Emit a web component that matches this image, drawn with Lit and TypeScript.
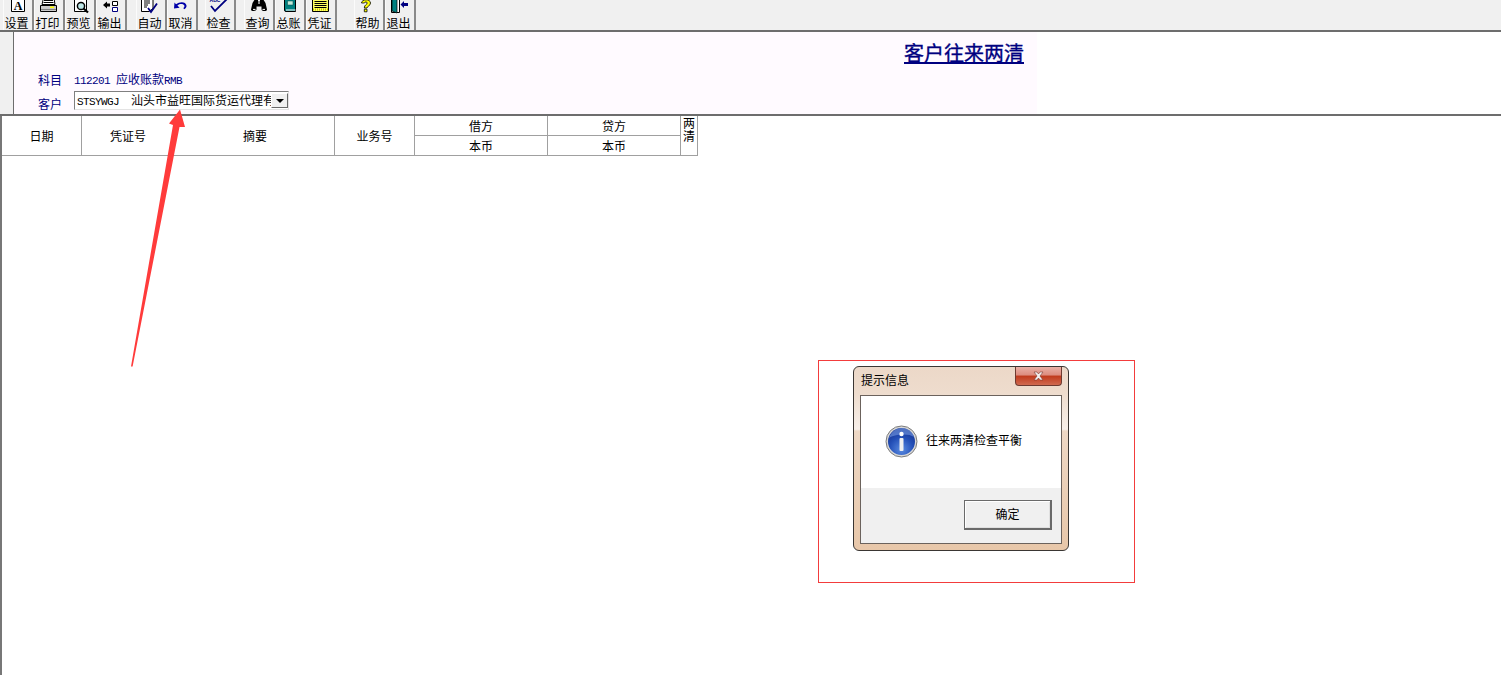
import { LitElement, html, css, svg } from "lit";
import { customElement } from "lit/decorators.js";

const icons: Record<string, unknown> = {
  set: svg`<path d="M7.5 -3H20.5V11.5H7.5Z" fill="#fff" stroke="#000"/><text x="14" y="9.5" font-family="Liberation Serif" font-size="12" font-weight="700" text-anchor="middle" fill="#000">A</text>`,
  print: svg`<path d="M8.5 -2H19L20 4.5H7Z" fill="#fff" stroke="#000"/><path d="M9 0.5H18M8.5 2.5H18.5" stroke="#000"/><path d="M5.5 5.5H21.5V11.5H5.5Z" fill="#c8c8c8" stroke="#000"/><path d="M15 6.5H19V8H15Z" fill="#ff0"/><path d="M6 9.5H21" stroke="#808080"/>`,
  preview: svg`<path d="M8.5 -3H20.5V11.5H8.5Z" fill="#fff" stroke="#000"/><circle cx="15" cy="6" r="3.6" fill="#bfe8e8" stroke="#000" stroke-width="1.5"/><path d="M17.5 8.5L22 12.5" stroke="#000" stroke-width="2.2"/>`,
  out: svg`<path d="M6 5L10 1.5V3.5H13V6.5H10V8.5Z" fill="#000"/><path d="M15.5 1.5H20.5V5.5H15.5Z" fill="#fff" stroke="#000"/><path d="M15.5 7.5H20.5V11.5H15.5Z" fill="#fff" stroke="#000080"/>`,
  auto: svg`<g transform="translate(-2 0)"><path d="M6.5 -3H16.5L18 -1V8.5L14 11.5H6.5Z" fill="#fff" stroke="#000"/><path d="M9 1H15M9 3H15M9 5H13M9 7H12" stroke="#000"/><path d="M13 8L16 12L22 3.5" fill="none" stroke="#000080" stroke-width="1.8"/></g>`,
  undo: svg`<g transform="translate(-2 0)"><path d="M8 8.5L8.5 2.5L10 4.2C14 1 20 1.6 20.5 5.5C20.8 7.5 19.5 8.6 18 9.2L17.4 8C19.2 7 18.8 4.6 16 4.1C14 3.8 12.4 4.5 11.4 5.6L13.6 7.8Z" fill="#0000a8"/></g>`,
  check: svg`<g transform="translate(-1 0)"><text x="10" y="1.5" font-family="Liberation Sans" font-size="5" font-weight="700" text-anchor="middle" fill="#000080">ABC</text><path d="M6 6L10 11L22 -1" fill="none" stroke="#000080" stroke-width="1.8"/></g>`,
  find: svg`<g transform="translate(-1 0)"><path d="M8.5 3L11 -1H14V4H16V-1H19L21.5 3L23 9.5C23 11.5 18 11.5 17.5 9.5V6.5H12.5V9.5C12 11.5 7 11.5 7 9.5Z" fill="#000"/><path d="M9 9.4H11.5M18.5 9.4H21" stroke="#fff"/><path d="M14 1H16V4H14Z" fill="#888"/></g>`,
  ledger: svg`<g transform="translate(-1 0)"><path d="M9.5 -2H20.5V11.5H11A1.5 1.5 0 0 1 9.5 10Z" fill="#008080" stroke="#000"/><path d="M12.5 1H18V5H12.5Z" fill="#c0e8d8" stroke="#004848" stroke-width=".5"/><path d="M11 10H20.5" stroke="#fff"/></g>`,
  voucher: svg`<g transform="translate(-1 0)"><path d="M6.5 -3H22.5V11.5H6.5Z" fill="#ffff60" stroke="#000"/><path d="M8.5 1.5H20.5M8.5 3.5H20.5M8.5 5.5H20.5M8.5 7.5H20.5" stroke="#000"/><path d="M7 9.5H22" stroke="#c8c800" stroke-width="2" stroke-dasharray="1 1"/></g>`,
  help: svg`<g transform="translate(-2 0)"><path d="M8.5 3C8.5 -1 17.5 -1.5 17.5 3C17.5 6 14.3 5.8 14 8H11.3C11.3 4.5 14.2 4.8 14.2 3C14.2 1.6 11.7 1.6 11.5 3Z" fill="#ffff00" stroke="#000" stroke-width=".8"/><path d="M11.3 9.2H14V11.8H11.3Z" fill="#ffff00" stroke="#000" stroke-width=".8"/></g>`,
  exit: svg`<g transform="translate(-2 0)"><path d="M7.5 -3H15.5V12.5H7.5Z" fill="#fff" stroke="#000"/><path d="M8 -3L13 -1V13L8 11Z" fill="#008080" stroke="#000" stroke-width=".7"/><path d="M16.5 4.5L20 1V3H24V6H20V8Z" fill="#000080"/></g>`,
};

const groups = [
  [["设置", "set"], ["打印", "print"], ["预览", "preview"], ["输出", "out"]],
  [["自动", "auto"], ["取消", "undo"]],
  [["检查", "check"]],
  [["查询", "find"], ["总账", "ledger"], ["凭证", "voucher"]],
  [["帮助", "help"], ["退出", "exit"]],
];

@customElement("app-root")
export class AppRoot extends LitElement {
  static styles = css`
    :host {
      display: block;
      position: relative;
      width: 1501px;
      height: 675px;
      overflow: hidden;
      background: #fff;
      font-family: "Noto Sans CJK SC", sans-serif;
      font-size: 12px;
      line-height: 16px;
      color: #000;
    }
    .toolbar {
      display: flex;
      height: 30px;
      padding-left: 3px;
      background: #f0f0f0;
      border-bottom: 2px solid #6d6d6d;
    }
    .group { display: flex; }
    .g1 { margin-left: 9px; }
    .g2 { margin-left: 7px; }
    .g3 { margin-left: 8px; }
    .g4 { margin-left: 17px; }
    .btn {
      width: 31px;
      height: 30px;
      box-sizing: border-box;
      display: flex;
      flex-direction: column;
      align-items: center;
      border-right: 2px solid #8a8a8a;
      border-left: 1px solid #fbfbfb;
      white-space: nowrap;
    }
    .btn svg { display: block; width: 30px; height: 14px; flex: none; margin-left: 1px; }
    .btn span { margin-top: 1px; margin-left: -3px; }
    .head {
      display: flex;
      height: 82px;
      background: #f0f0f0;
      border-bottom: 2px solid #6d6d6d;
    }
    .head-panel {
      margin-left: 13px;
      flex: 1;
      border-left: 1px solid #6d6d6d;
      background: linear-gradient(90deg, #fffaff 1023px, #fff 1023px);
      color: #000080;
      display: flex;
      flex-direction: column;
    }
    .title {
      margin: 9px 0 0 890px;
      font-size: 20px;
      line-height: 24px;
      font-weight: 400;
      -webkit-text-stroke: 0.35px #000080;
      text-decoration: underline;
      width: max-content;
    }
    .field { display: flex; align-items: center; padding-left: 24px; }
    .f1 { margin-top: 7px; height: 16px; }
    .f2 { margin-top: 3px; height: 19px; }
    .lbl { width: 36px; flex: none; }
    .f2 .lbl { padding-top: 6px; }
    .mono { font-family: "Liberation Mono", monospace; font-size: 11px; letter-spacing: -0.6px; }
    .val { white-space: pre; }
    .combo {
      width: 215px;
      height: 19px;
      box-sizing: border-box;
      border: 1px solid #a0a0a0;
      border-top-color: #808080;
      border-left-color: #808080;
      border-right-color: #e3e3e3;
      border-bottom-color: #e3e3e3;
      background: #fff;
      display: flex;
      align-items: center;
      color: #000;
      padding-left: 2px;
    }
    .combo-text { flex: 1; overflow: hidden; white-space: pre; min-width: 0; padding-top: 1px; }
    .drop {
      width: 17px;
      height: 15px;
      flex: none;
      box-sizing: border-box;
      background: #f0f0f0;
      border: 1px solid;
      border-color: #fff #696969 #696969 #fff;
      display: flex;
      align-items: center;
      justify-content: center;
    }
    .drop i {
      width: 0; height: 0;
      border: 4px solid transparent;
      border-top: 4px solid #000;
      border-bottom: 0;
    }
    .body {
      height: 559px;
      border-left: 2px solid #777;
    }
    .grid {
      display: grid;
      grid-template-columns: 80px 253px 80px 133px 133px 17px;
      grid-template-rows: 20px 20px;
      width: 696px;
    }
    .c {
      box-sizing: border-box;
      border-right: 1px solid #a0a0a0;
      border-bottom: 1px solid #a0a0a0;
      display: flex;
      align-items: center;
      justify-content: center;
    }
    .span2 { grid-row: span 2; }
    .zy { display: grid; grid-template-columns: 92px 1fr; justify-content: stretch; }
    .zy span { text-align: center; }
    .zy span:last-child { padding-left: 2px; }
    .narrow { align-items: flex-start; line-height: 13px; text-align: center; }
    .narrow span { display: block; height: 13px; }
    .redbox {
      position: absolute;
      left: 818px; top: 360px;
      width: 315px; height: 221px;
      border: 1px solid #f33c3c;
    }
    .arrow { position: absolute; left: 120px; top: 100px; }
    .dlg {
      position: absolute;
      left: 853px; top: 366px;
      width: 216px; height: 185px;
      box-sizing: border-box;
      border: 1px solid #3a3633;
      border-radius: 6px;
      padding: 0 6px 6px;
      display: flex;
      flex-direction: column;
      background: linear-gradient(180deg, #ecd8c8 0%, #eedccd 14%, #f7efe9 34%, #eed8c5 35%, #e8c7a9 100%);
    }
    .dlg-title {
      height: 28px;
      flex: none;
      display: flex;
      justify-content: space-between;
      align-items: flex-start;
    }
    .dlg-title > span { margin: 5px 0 0 1px; }
    .close {
      width: 47px;
      height: 19px;
      box-sizing: border-box;
      border: 1px solid #6e3a30;
      border-top: 0;
      border-radius: 0 0 4px 4px;
      background: linear-gradient(180deg, #eab0a6 0%, #dc8c7e 45%, #c03a1c 50%, #d06a50 100%);
      display: flex;
      align-items: center;
      justify-content: center;
    }
    .dlg-in {
      flex: 1;
      border: 1px solid #6b625c;
      background: #f0f0f0;
      display: flex;
      flex-direction: column;
    }
    .msg {
      height: 92px;
      box-sizing: border-box;
      background: #fff;
      display: flex;
      align-items: flex-start;
      gap: 7px;
      padding: 29px 0 0 24px;
    }
    .msg svg { flex: none; display: block; }
    .msg span { margin-top: 7px; }
    .foot { display: flex; justify-content: flex-end; padding: 12px 9px 0 0; }
    .ok {
      width: 88px;
      height: 30px;
      box-sizing: border-box;
      border: 1px solid #6a6a6a;
      border-right-width: 2px;
      border-bottom-width: 2px;
      box-shadow: inset 1px 1px 0 #fff, inset -1px -1px 0 #e0e0e0;
      background: #f0f0f0;
      display: flex;
      align-items: center;
      justify-content: center;
      padding-bottom: 2px;
    }
  `;

  render() {
    return html`
      <div class="toolbar">
        ${groups.map((g, i) => html`
          <div class="group g${i}">
            ${g.map(([label, icon]) => html`
              <div class="btn">
                <svg viewBox="0 0 30 14">${icons[icon]}</svg>
                <span>${label}</span>
              </div>`)}
          </div>`)}
      </div>
      <div class="head">
        <div class="head-panel">
          <div class="title">客户往来两清</div>
          <div class="field f1">
            <span class="lbl">科目</span>
            <span class="val"><span class="mono">112201 </span>应收账款<span class="mono">RMB</span></span>
          </div>
          <div class="field f2">
            <span class="lbl">客户</span>
            <div class="combo">
              <span class="combo-text"><span class="mono">STSYWGJ  </span>汕头市益旺国际货运代理有限公司</span>
              <div class="drop"><i></i></div>
            </div>
          </div>
        </div>
      </div>
      <div class="body">
        <div class="grid">
          <div class="c span2">日期</div>
          <div class="c span2 zy"><span>凭证号</span><span>摘要</span></div>
          <div class="c span2">业务号</div>
          <div class="c">借方</div>
          <div class="c">贷方</div>
          <div class="c span2 narrow"><div><span>两</span><span>清</span></div></div>
          <div class="c">本币</div>
          <div class="c">本币</div>
        </div>
      </div>

      <svg class="arrow" width="70" height="270" viewBox="0 0 70 270">
        <path d="M11 266.5L12.6 266.5L59.5 27L65 27L60 9.5L49 23.5L53 25Z" fill="#ff3b3b"/>
      </svg>

      <div class="redbox"></div>

      <div class="dlg">
        <div class="dlg-title">
          <span>提示信息</span>
          <div class="close">
            <svg width="13" height="10" viewBox="0 0 13 10">
              <path d="M2 1H5L6.5 3L8 1H11L8 5L11 9H8L6.5 7L5 9H2L5 5Z" fill="#f4f0f0" stroke="#7a3a30" stroke-width=".6"/>
            </svg>
          </div>
        </div>
        <div class="dlg-in">
          <div class="msg">
            <svg width="34" height="34" viewBox="0 0 34 34">
              <defs>
                <radialGradient id="b" cx=".5" cy=".8" r=".8">
                  <stop offset="0" stop-color="#5a8be0"/>
                  <stop offset=".55" stop-color="#2450b8"/>
                  <stop offset="1" stop-color="#16308c"/>
                </radialGradient>
              </defs>
              <circle cx="16.5" cy="16.5" r="15.5" fill="#d8d8d8" stroke="#7c7c7c"/>
              <circle cx="16.5" cy="16.5" r="13.5" fill="url(#b)"/>
              <path d="M4 13C9 9 24 8 29 12C27 5 21 3 16.5 3C11 3 6 7 4 13Z" fill="#7ea4ea" opacity=".55"/>
              <circle cx="16.5" cy="9" r="2.2" fill="#fff"/>
              <rect x="14.5" y="13" width="4" height="13" rx="1" fill="#f0f0f0"/>
            </svg>
            <span>往来两清检查平衡</span>
          </div>
          <div class="foot"><div class="ok">确定</div></div>
        </div>
      </div>
    `;
  }
}
